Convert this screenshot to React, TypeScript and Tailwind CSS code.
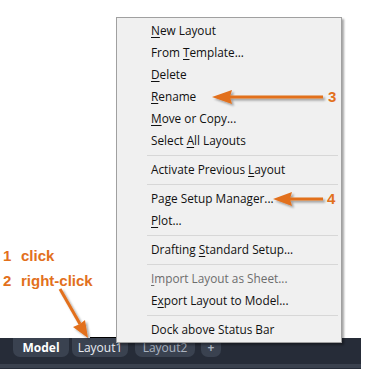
import React from 'react';

type Item = { label: React.ReactNode; disabled?: boolean } | 'sep';

const u = (ch: string) => <span className="underline underline-offset-2">{ch}</span>;

const items: Item[] = [
  { label: <>{u('N')}ew Layout</> },
  { label: <>From {u('T')}emplate...</> },
  { label: <>{u('D')}elete</> },
  { label: <>{u('R')}ename</> },
  { label: <>{u('M')}ove or Copy...</> },
  { label: <>Select {u('A')}ll Layouts</> },
  'sep',
  { label: <>Activate Previous {u('L')}ayout</> },
  'sep',
  { label: <>Page Setup Manager...</> },
  { label: <>{u('P')}lot...</> },
  'sep',
  { label: <>Drafting {u('S')}tandard Setup...</> },
  'sep',
  { label: <>{u('I')}mport Layout as Sheet...</>, disabled: true },
  { label: <>E{u('x')}port Layout to Model...</> },
  'sep',
  { label: <>Dock above Status Bar</> },
];

const ContextMenu: React.FC = () => (
  <div className="absolute left-[116px] top-[17px] w-[226px] bg-[#f0f0f0] border border-[#a0a0a0] shadow-[2px_2px_2px_rgba(0,0,0,0.35)] pt-[2px] pb-[1px] font-['Open_Sans',sans-serif] text-[11.8px]">
    {items.map((it, i) =>
      it === 'sep' ? (
        <div key={i} className="h-[7px] flex items-center pl-[30px] pr-[3px]">
          <div className="h-px w-full bg-[#d7d7d7]" />
        </div>
      ) : (
        <div
          key={i}
          className={`h-[22px] flex items-center pl-[34px] ${it.disabled ? 'text-[#6d6d6d]' : 'text-[#111]'}`}
        >
          <span>{it.label}</span>
        </div>
      )
    )}
  </div>
);

const Annotations: React.FC = () => (
  <svg className="absolute inset-0 pointer-events-none" width="367" height="382" viewBox="0 0 367 382">
    <defs>
      <filter id="sh" x="-20%" y="-50%" width="140%" height="200%">
        <feDropShadow dx="2" dy="2" stdDeviation="1.2" floodColor="#000" floodOpacity="0.35" />
      </filter>
    </defs>
    <g fill="#e2701c" stroke="none" filter="url(#sh)">
      <rect x="228" y="95.5" width="95" height="3" />
      <polygon points="212,97 232,90 230,97 232,104" />
      <rect x="288" y="197.5" width="35" height="3" />
      <polygon points="273,199 292,192 290,199 292,206" />
      <line x1="60" y1="289" x2="80" y2="324" stroke="#e2701c" strokeWidth="3" />
      <polygon points="88,338 73,327 80,324 85,320" />
    </g>
    <g fill="#e2701c" fontFamily="'Liberation Sans', Arial, sans-serif" fontWeight="bold" fontSize="15">
      <text x="328" y="102">3</text>
      <text x="327" y="204">4</text>
      <text x="3" y="261">1</text>
      <text x="21" y="261">click</text>
      <text x="3" y="286">2</text>
      <text x="21" y="286">right-click</text>
    </g>
  </svg>
);

const Tab: React.FC<{ label: string; className: string; textClass: string }> = ({ label, className, textClass }) => (
  <div className={`h-[19px] flex items-center justify-center rounded-b-[7px] bg-[#3a4250] ${className}`}>
    <span className={textClass}>{label}</span>
  </div>
);

export default function App() {
  return (
    <div className="relative w-[367px] h-[382px] bg-white overflow-hidden flex flex-col">
      <div className="flex-1" />
      <div className="w-[361px] h-[31px] bg-[#262c38] flex flex-col font-['Open_Sans',sans-serif] text-[12px]">
        <div className="flex h-[19px] pl-[13px] gap-[3px] relative">
          <Tab label="Model" className="w-[56px]" textClass="text-white font-bold" />
          <Tab label="Layout1" className="w-[56px] relative" textClass="text-[#e8ecf2]" />
          <Tab label="Layout2" className="w-[60px] ml-[4px]" textClass="text-[#aab3c0]" />
          <Tab label="+" className="w-[20px] ml-[3px]" textClass="text-[#aab3c0] font-bold" />
          <div className="absolute left-[90px] top-[-1px] w-[27px] h-px bg-black" />
        </div>
        <div className="h-[7px]" />
        <div className="h-[4px] bg-[#3a414e]" />
      </div>
      <div className="h-[13px]" />
      <ContextMenu />
      <Annotations />
    </div>
  );
}
